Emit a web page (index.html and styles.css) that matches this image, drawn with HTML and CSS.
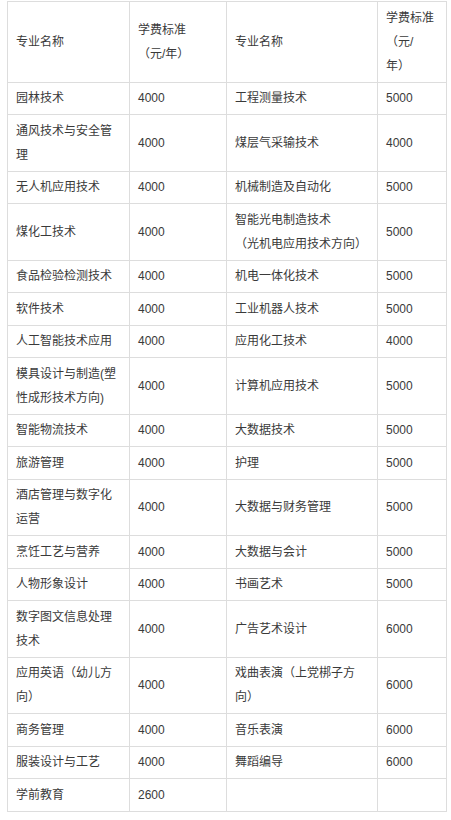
FILE: index.html
```html
<!DOCTYPE html>
<html lang="zh-CN">
<head>
<meta charset="utf-8">
<link rel="stylesheet" href="styles.css">
</head>
<body>
<table class="fees">
<colgroup>
<col class="c1"><col class="c2"><col class="c3"><col class="c4">
</colgroup>
<tbody>
<tr><td>专业名称</td><td>学费标准<br>（元/年）</td><td>专业名称</td><td>学费标准<br>（元/<br>年）</td></tr>
<tr><td>园林技术</td><td>4000</td><td>工程测量技术</td><td>5000</td></tr>
<tr><td>通风技术与安全管<br>理</td><td>4000</td><td>煤层气采输技术</td><td>4000</td></tr>
<tr><td>无人机应用技术</td><td>4000</td><td>机械制造及自动化</td><td>5000</td></tr>
<tr><td>煤化工技术</td><td>4000</td><td>智能光电制造技术<br>（光机电应用技术方向）</td><td>5000</td></tr>
<tr><td>食品检验检测技术</td><td>4000</td><td>机电一体化技术</td><td>5000</td></tr>
<tr><td>软件技术</td><td>4000</td><td>工业机器人技术</td><td>5000</td></tr>
<tr><td>人工智能技术应用</td><td>4000</td><td>应用化工技术</td><td>4000</td></tr>
<tr><td>模具设计与制造(塑<br>性成形技术方向)</td><td>4000</td><td>计算机应用技术</td><td>5000</td></tr>
<tr><td>智能物流技术</td><td>4000</td><td>大数据技术</td><td>5000</td></tr>
<tr><td>旅游管理</td><td>4000</td><td>护理</td><td>5000</td></tr>
<tr><td>酒店管理与数字化<br>运营</td><td>4000</td><td>大数据与财务管理</td><td>5000</td></tr>
<tr><td>烹饪工艺与营养</td><td>4000</td><td>大数据与会计</td><td>5000</td></tr>
<tr><td>人物形象设计</td><td>4000</td><td>书画艺术</td><td>5000</td></tr>
<tr><td>数字图文信息处理<br>技术</td><td>4000</td><td>广告艺术设计</td><td>6000</td></tr>
<tr><td>应用英语（幼儿方<br>向）</td><td>4000</td><td>戏曲表演（上党梆子方<br>向）</td><td>6000</td></tr>
<tr><td>商务管理</td><td>4000</td><td>音乐表演</td><td>6000</td></tr>
<tr><td>服装设计与工艺</td><td>4000</td><td>舞蹈编导</td><td>6000</td></tr>
<tr><td>学前教育</td><td>2600</td><td></td><td></td></tr>
</tbody>
</table>
</body>
</html>
```

FILE: styles.css
```css
html, body {
  margin: 0;
  padding: 0;
  background: #ffffff;
}

body {
  padding: 1px 0 0 7px;
  font-family: "Liberation Sans", "Noto Sans CJK SC", sans-serif;
  font-size: 12px;
  color: #3a3a3a;
}

.fees {
  border-collapse: collapse;
  table-layout: fixed;
  width: 439px;
}

.c1 { width: 122px; }
.c2 { width: 97px; }
.c3 { width: 151px; }
.c4 { width: 69px; }

.fees td {
  border: 1px solid #dddddd;
  padding: 3.75px 8px;
  line-height: 24px;
  vertical-align: middle;
  text-align: left;
  white-space: nowrap;
  overflow: hidden;
}
```
